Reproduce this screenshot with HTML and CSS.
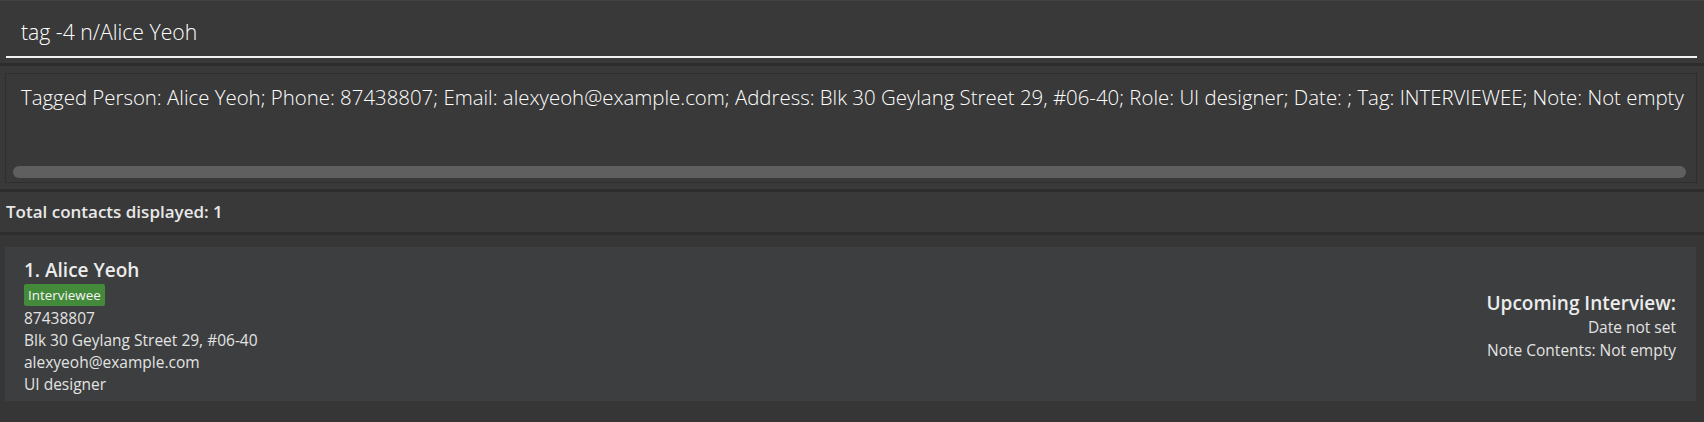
FILE: index.html
```html
<!DOCTYPE html>
<html>
<head>
<meta charset="utf-8">
<link rel="stylesheet" href="styles.css">
</head>
<body>
<div class="app">
  <div class="command">
    <div class="command-field">tag -4 n/Alice Yeoh</div>
  </div>
  <div class="sep"></div>
  <div class="result">
    <div class="result-box">
      <div class="result-text">Tagged Person: Alice Yeoh; Phone: 87438807; Email: alexyeoh@example.com; Address: Blk 30 Geylang Street 29, #06-40; Role: UI designer; Date: ; Tag: INTERVIEWEE; Note: Not empty</div>
      <div class="scroll-track"><div class="scroll-thumb"></div></div>
    </div>
  </div>
  <div class="sep"></div>
  <div class="status">Total contacts displayed: 1</div>
  <div class="sep"></div>
  <div class="list">
    <div class="card">
      <div class="card-left">
        <div class="name">1. Alice Yeoh</div>
        <div class="tags"><span class="tag">Interviewee</span></div>
        <div class="line">87438807</div>
        <div class="line">Blk 30 Geylang Street 29, #06-40</div>
        <div class="line">alexyeoh@example.com</div>
        <div class="line">UI designer</div>
      </div>
      <div class="card-right">
        <div class="heading">Upcoming Interview:</div>
        <div class="line">Date not set</div>
        <div class="line">Note Contents: Not empty</div>
      </div>
    </div>
  </div>
</div>
</body>
</html>
```
FILE: styles.css
```css
html, body {
  margin: 0;
  padding: 0;
  background: #363636;
}
.app {
  display: flex;
  flex-direction: column;
  width: 1704px;
  height: 422px;
  overflow: hidden;
  font-family: "Open Sans", "Noto Sans", sans-serif;
}
.command {
  height: 63px;
  background: #393939;
  border-top: 1px solid #414141;
  box-sizing: border-box;
  padding: 0 7px 0 6px;
  display: flex;
  flex-direction: column;
  justify-content: flex-end;
}
.command-field {
  height: 50px;
  box-sizing: border-box;
  border-bottom: 2px solid #f2f2f2;
  margin-bottom: 5px;
  padding: 11px 0 0 15px;
  color: #ffffff;
  font-weight: 300;
  font-size: 21.2px;
  line-height: 26px;
  white-space: nowrap;
}
.sep {
  height: 3px;
  background: #2d2d2d;
  flex: none;
}
.result {
  height: 123px;
  background: #393939;
  box-sizing: border-box;
  padding: 7px 7px 6px 5px;
  flex: none;
}
.result-box {
  height: 110px;
  box-sizing: border-box;
  border: 1px solid #2e2e2e;
  display: flex;
  flex-direction: column;
  justify-content: space-between;
  padding: 9px 10px 4px 7px;
}
.result-text {
  padding-left: 8px;
  color: #ffffff;
  font-weight: 300;
  font-size: 20.4px;
  line-height: 28px;
  white-space: nowrap;
  overflow: hidden;
}
.scroll-track {
  height: 12px;
}
.scroll-thumb {
  height: 12px;
  border-radius: 6px;
  background: #5f5f5f;
}
.status {
  height: 40px;
  background: #393939;
  box-sizing: border-box;
  padding: 8px 0 0 6px;
  color: #e8e8e8;
  font-weight: 600;
  font-size: 17px;
  line-height: 24px;
  flex: none;
}
.list {
  flex: 1;
  background: #363636;
  padding: 12px 8px 0 5px;
}
.card {
  height: 154px;
  background: #3c3e3f;
  display: flex;
  justify-content: space-between;
  align-items: center;
  box-sizing: border-box;
  padding: 0 20px 0 19px;
}
.card-left {
  align-self: flex-start;
  padding-top: 10px;
  display: flex;
  flex-direction: column;
}
.name {
  color: #ececec;
  font-weight: 600;
  font-size: 19px;
  line-height: 26px;
}
.tags {
  display: flex;
  margin: 1px 0 1px;
}
.tag {
  background: #438a3b;
  color: #f4f4f4;
  font-size: 13.4px;
  line-height: 22px;
  padding: 0 4px;
  border-radius: 2px;
}
.line {
  color: #e3e3e3;
  font-size: 15.5px;
  line-height: 22px;
  white-space: nowrap;
}
.card-right {
  display: flex;
  flex-direction: column;
  align-items: flex-end;
  padding-top: 4px;
}
.heading {
  color: #ececec;
  font-weight: 600;
  font-size: 19px;
  line-height: 26px;
}
.card-right .line {
  line-height: 23px;
}
```
